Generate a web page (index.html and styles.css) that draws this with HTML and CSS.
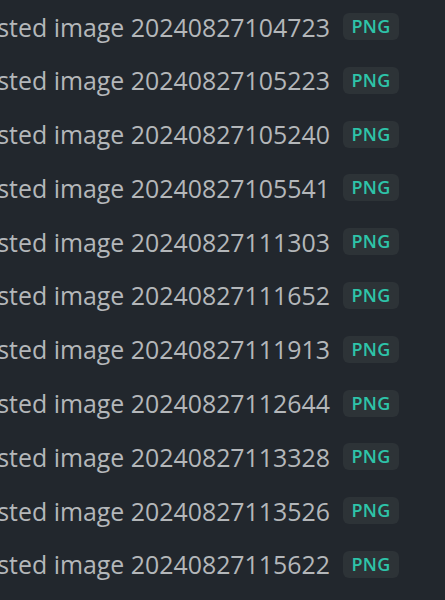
FILE: index.html
```html
<!DOCTYPE html>
<html>
<head>
<meta charset="utf-8">
<link rel="stylesheet" href="styles.css">
</head>
<body>
<ul class="list">
  <li class="row"><span class="name">Pasted image 20240827104723</span><span class="tag">PNG</span></li>
  <li class="row"><span class="name">Pasted image 20240827105223</span><span class="tag">PNG</span></li>
  <li class="row"><span class="name">Pasted image 20240827105240</span><span class="tag">PNG</span></li>
  <li class="row"><span class="name">Pasted image 20240827105541</span><span class="tag">PNG</span></li>
  <li class="row"><span class="name">Pasted image 20240827111303</span><span class="tag">PNG</span></li>
  <li class="row"><span class="name">Pasted image 20240827111652</span><span class="tag">PNG</span></li>
  <li class="row"><span class="name">Pasted image 20240827111913</span><span class="tag">PNG</span></li>
  <li class="row"><span class="name">Pasted image 20240827112644</span><span class="tag">PNG</span></li>
  <li class="row"><span class="name">Pasted image 20240827113328</span><span class="tag">PNG</span></li>
  <li class="row"><span class="name">Pasted image 20240827113526</span><span class="tag">PNG</span></li>
  <li class="row"><span class="name">Pasted image 20240827115622</span><span class="tag">PNG</span></li>
</ul>
</body>
</html>
```
FILE: styles.css
```css
html, body {
  margin: 0;
  padding: 0;
  background: #22272d;
  width: 445px;
  height: 600px;
  overflow: hidden;
}
.list {
  list-style: none;
  margin: 0;
  padding: 13px 0 0 0;
  display: flex;
  flex-direction: column;
  gap: 26.8px;
  font-family: "Open Sans", "Noto Sans", sans-serif;
}
.row {
  display: flex;
  justify-content: flex-end;
  align-items: center;
  height: 27px;
  padding-right: 46px;
  gap: 13px;
  white-space: nowrap;
}
.name {
  flex-shrink: 0;
  color: #b4b7ba;
  font-size: 24.9px;
  line-height: 27px;
  margin-top: 1px;
}
.tag {
  flex-shrink: 0;
  box-sizing: border-box;
  width: 56px;
  height: 27px;
  border-radius: 6px;
  background: #2d3337;
  color: #2ec4a9;
  font-size: 18px;
  font-weight: 600;
  line-height: 27px;
  text-align: center;
  letter-spacing: 0.3px;
}
```
